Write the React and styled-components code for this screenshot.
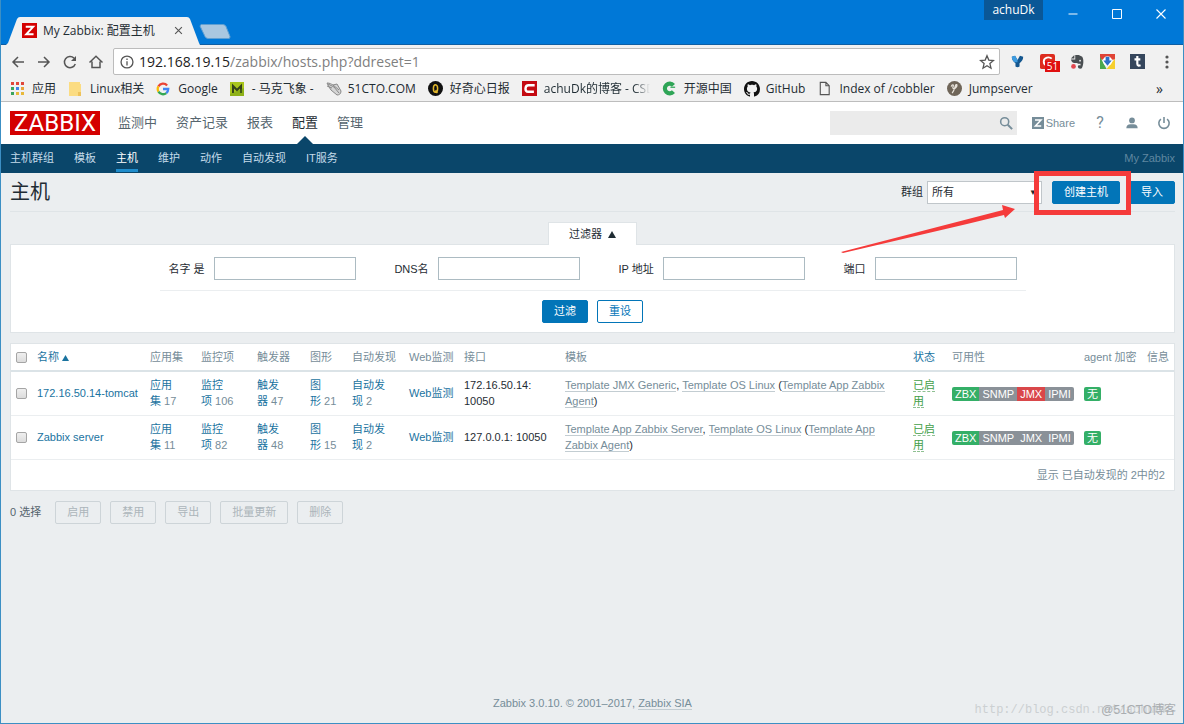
import React from 'react'
import styled, { createGlobalStyle } from 'styled-components'

const uiFont = '"Open Sans", "Noto Sans CJK SC", sans-serif'
const pageFont = '"Liberation Sans", "Noto Sans CJK SC", sans-serif'

const colors = {
  title: '#0078d7',
  chrome: '#f1f1f1',
  nav: '#0a466a',
  page: '#ebeef0',
  link: '#1a739f',
  grey: '#768d99',
  text: '#1f2c33',
  button: '#0275b8',
  green: '#34af67',
  red: '#d9474a',
  mark: '#f53b3b'
}

const menu = [
  { label: '监测中' },
  { label: '资产记录' },
  { label: '报表' },
  { label: '配置', active: true },
  { label: '管理' }
]

const subMenu = ['主机群组', '模板', '主机', '维护', '动作', '自动发现', 'IT服务']

const filters = [
  { id: 'name', label: '名字 是' },
  { id: 'dns', label: 'DNS名' },
  { id: 'ip', label: 'IP 地址' },
  { id: 'port', label: '端口' }
]

const columns = [21, 113, 51, 56, 53, 42, 57, 55, 101, null, 39, 132, 63, 32]

const hosts = [
  {
    name: '172.16.50.14-tomcat',
    counts: [['应用集', 17], ['监控项', 106], ['触发器', 47], ['图形', 21], ['自动发现', 2]],
    address: '172.16.50.14: 10050',
    templates: ['Template JMX Generic', 'Template OS Linux'],
    parent: 'Template App Zabbix Agent',
    jmx: 'red'
  },
  {
    name: 'Zabbix server',
    counts: [['应用集', 11], ['监控项', 82], ['触发器', 48], ['图形', 15], ['自动发现', 2]],
    address: '127.0.0.1: 10050',
    templates: ['Template App Zabbix Server', 'Template OS Linux'],
    parent: 'Template App Zabbix Agent',
    jmx: 'grey'
  }
]

const actions = ['启用', '禁用', '导出', '批量更新', '删除']

const Stroke = ({ size = 16, width = 1.5, children }) => (
  <svg width={size} height={size} viewBox='0 0 16 16' fill='none' stroke='currentColor' strokeWidth={width} aria-hidden='true'>
    {children}
  </svg>
)

const BackIcon = () => <Stroke><path d='M14 8H3M8 3L3 8l5 5' /></Stroke>
const ForwardIcon = () => <Stroke><path d='M2 8h11M8 3l5 5-5 5' /></Stroke>
const ReloadIcon = () => (
  <Stroke>
    <path d='M13.3 10A5.6 5.6 0 1 1 12 4.1' />
    <path d='M14 2v5H9z' fill='currentColor' stroke='none' />
  </Stroke>
)
const HomeIcon = () => <Stroke><path d='M1.500 8.500L8 2.300l6.500 6.200M4 7.500V13.500h8V7.500' /></Stroke>
const InfoIcon = () => (
  <Stroke size={14}>
    <circle cx='8' cy='8' r='6.8' />
    <path d='M8 7v5M8 4v1.600' />
  </Stroke>
)
const StarIcon = () => (
  <Stroke width={1.3}>
    <path d='M8 1.800l1.800 4.300 4.700.4-3.600 3.100 1.100 4.600L8 11.700l-4 2.500 1.100-4.600L1.500 6.500l4.700-.4z' />
  </Stroke>
)

const ZIcon = ({ size = 16, bg = '#d40000' }) => (
  <svg width={size} height={size} viewBox='0 0 16 16' aria-hidden='true'>
    <path d='M0 0h16v16H0z' fill={bg} />
    <path d='M4 4h8L4.500 12H12.300' fill='none' stroke='#fff' strokeWidth='2' />
  </svg>
)

const AppsIcon = () => (
  <svg width='16' height='16' viewBox='0 0 16 16' aria-hidden='true'>
    {['#e0473b', '#e0473b', '#e0473b', '#3aa45c', '#3f82e8', '#e8a33a', '#3aa45c', '#e8b93a', '#e8b93a'].map((c, i) => (
      <rect key={i} x={1 + (i % 3) * 5} y={1 + Math.floor(i / 3) * 5} width='3' height='3' fill={c} />
    ))}
  </svg>
)
const FolderIcon = () => (
  <svg width='16' height='16' viewBox='0 0 16 16' aria-hidden='true'>
    <path d='M1 1h11v2h1v12H1z' fill='#fbdc82' />
    <path d='M10 11h3v4h-3z' fill='#eec25b' />
  </svg>
)
const GoogleIcon = () => (
  <svg width='14' height='14' viewBox='0 0 16 16' fill='none' strokeWidth='2.6' aria-hidden='true'>
    <path d='M12.700 4A6 6 0 0 0 2.800 5' stroke='#ea4335' />
    <path d='M2.800 5a6 6 0 0 0 0 6' stroke='#fbbc05' />
    <path d='M2.800 11a6 6 0 0 0 9 1.600' stroke='#34a853' />
    <path d='M8 8h6a6 6 0 0 1-2.200 4.600' stroke='#4285f4' />
  </svg>
)
const MIcon = () => (
  <svg width='14' height='14' viewBox='0 0 14 14' aria-hidden='true'>
    <path d='M0 0h14v14H0z' fill='#a9c51c' />
    <path d='M3 11V4l4 4 4-4v7' fill='none' stroke='#34421a' strokeWidth='2' />
    <path d='M0 12l14-6v8H0z' fill='#5d8c12' opacity='.35' />
  </svg>
)
const CtoIcon = () => (
  <svg width='16' height='16' viewBox='0 0 16 16' fill='#d5d5d5' stroke='#888' aria-hidden='true'>
    <path d='M1 2c3 0 4 1 6 2l4-1 4 7c0 3-2 4-4 4L5 9 3 6z' />
    <path d='M1 5l5 2M2 3l6 3 5 6M7 4l6 5' fill='none' />
  </svg>
)
const QIcon = () => (
  <svg width='15' height='15' viewBox='0 0 16 16' fill='none' aria-hidden='true'>
    <circle cx='8' cy='8' r='8' fill='#111' />
    <path d='M8 4c-3 0-3 8 0 8s3-8 0-8zM8 10l2 3' stroke='#e4b92c' strokeWidth='1.6' />
  </svg>
)
const CsdnIcon = () => (
  <svg width='15' height='15' viewBox='0 0 16 16' aria-hidden='true'>
    <path d='M0 0h16v16H0z' fill='#c40a12' />
    <path d='M13.500 4.500H7C3 4.500 2.500 11.500 6.500 11.500h6.200' fill='none' stroke='#fff' strokeWidth='2.6' />
  </svg>
)
const OscIcon = () => (
  <svg width='15' height='15' viewBox='0 0 16 16' aria-hidden='true'>
    <path d='M12.200 4.600A5.200 5.200 0 1 0 12.200 11.400' fill='none' stroke='#2fa557' strokeWidth='4.4' />
    <path d='M9 6h5v1.300H9z' fill='#2fa557' />
  </svg>
)
const GithubIcon = () => (
  <svg width='16' height='16' viewBox='0 0 16 16' fill='#111' aria-hidden='true'>
    <path d='M8 0C3.580 0 0 3.580 0 8c0 3.540 2.290 6.530 5.470 7.590.4.070.55-.17.55-.38 0-.19-.01-.82-.01-1.490-2.010.37-2.530-.49-2.690-.94-.09-.23-.48-.94-.82-1.130-.28-.15-.68-.52-.01-.53.63-.01 1.080.58 1.230.82.72 1.210 1.870.87 2.330.66.07-.52.28-.87.51-1.070-1.780-.2-3.640-.89-3.640-3.950 0-.87.31-1.590.82-2.150-.08-.2-.36-1.020.08-2.120 0 0 .67-.21 2.200.82.64-.18 1.320-.27 2-.27s1.360.09 2 .27c1.530-1.040 2.200-.82 2.200-.82.44 1.100.16 1.920.08 2.120.51.56.82 1.270.82 2.150 0 3.070-1.870 3.750-3.650 3.950.29.25.54.73.54 1.480 0 1.070-.01 1.930-.01 2.200 0 .21.15.46.55.38A8.010 8.010 0 0 0 16 8c0-4.420-3.580-8-8-8z' />
  </svg>
)
const PageIcon = () => <Stroke size={15} width={1.2}><path d='M3.500 1.500h6l3.500 3.500v9.500H3.500zM9.500 1.500V5H13' /></Stroke>
const JumpIcon = () => (
  <svg width='15' height='15' viewBox='0 0 16 16' fill='none' aria-hidden='true'>
    <circle cx='8' cy='8' r='8' fill='#6f6558' />
    <path d='M4.500 6c1-3 3-2 2 0s1 3 3 1 1-4 0-3-1 5-4 9' stroke='#e9e4db' strokeWidth='1.3' />
  </svg>
)

const bookmarks = [
  { icon: <AppsIcon />, label: '应用' },
  { icon: <FolderIcon />, label: 'Linux相关' },
  { icon: <GoogleIcon />, label: 'Google' },
  { icon: <MIcon />, label: '- 马克飞象 -' },
  { icon: <CtoIcon />, label: '51CTO.COM' },
  { icon: <QIcon />, label: '好奇心日报' },
  { icon: <CsdnIcon />, label: 'achuDk的博客 - CSD', fade: true },
  { icon: <OscIcon />, label: '开源中国' },
  { icon: <GithubIcon />, label: 'GitHub' },
  { icon: <PageIcon />, label: 'Index of /cobbler' },
  { icon: <JumpIcon />, label: 'Jumpserver' }
]

const YIcon = () => (
  <svg width='13' height='13' viewBox='0 0 16 16' aria-hidden='true'>
    <path d='M1 2l4-1 3 5 3-5 4 1c0 4-2 6-4.500 8v4q-2.500 2-5 0v-4C3 8 1 6 1 2z' fill='#14578f' />
    <path d='M1 2l4-1 3 5v3L4.500 9C2.500 7 1 5 1 2z' fill='#3d9be0' />
  </svg>
)
const CIcon = () => (
  <svg width='15' height='15' viewBox='0 0 16 16' aria-hidden='true'>
    <rect width='16' height='16' rx='2' fill='#dd2c1f' />
    <path d='M12.500 5C10 2.500 4 3.500 4 8s5 5.500 8 3.500' fill='none' stroke='#fff' strokeWidth='2' />
  </svg>
)
const EvernoteIcon = () => (
  <svg width='14' height='14' viewBox='0 0 16 16' aria-hidden='true'>
    <path d='M6 0h4l4 2c2 3 1.500 10-.5 13-1 1-4.500.8-4.500-1.500s2-2 3-1.500V10c-2 0-3 0-4-1-2 .5-6 .5-7-4h5z' fill='#4a4f52' />
    <path d='M5 0v4H1z' fill='#4a4f52' />
    <circle cx='4' cy='13' r='2.7' fill='#e2474f' />
    <circle cx='11.5' cy='6.5' r='1' fill='#f1f1f1' />
  </svg>
)
const DownloadIcon = () => (
  <svg width='15' height='15' viewBox='0 0 16 16' aria-hidden='true'>
    <path d='M0 0h16v6H0z' fill='#e04436' />
    <path d='M0 3l7 13H0z' fill='#4aa84e' />
    <path d='M16 5v11H7z' fill='#f6cf2e' />
    <circle cx='8' cy='7.5' r='5' fill='#fff' />
    <path d='M6 3h4v4h2.500L8 12.500 3.500 7H6z' fill='#2d70c8' />
  </svg>
)
const TumblrIcon = () => (
  <svg width='15' height='15' viewBox='0 0 16 16' aria-hidden='true'>
    <path d='M0 0h16v16H0z' fill='#35465c' />
    <path d='M7.800 2v8.500c0 2 1.500 2.300 3.500 1.500M4.800 5.800H11' fill='none' stroke='#fff' strokeWidth='2.3' />
  </svg>
)

const SearchIcon = () => (
  <Stroke size={14} width={1.8}><circle cx='6.5' cy='6.5' r='4.6' /><path d='M10 10l5 5' strokeWidth='2.3' /></Stroke>
)
const UserIcon = () => (
  <svg width='14' height='14' viewBox='0 0 16 16' fill='currentColor' aria-hidden='true'>
    <circle cx='8' cy='5' r='3.3' />
    <path d='M1.500 14c0-3 2-4.500 4.500-4.500h4c2.500 0 4.500 1.500 4.500 4.500z' />
  </svg>
)
const PowerIcon = () => (
  <Stroke size={14} width={1.8}><path d='M4.500 3.500a5.900 5.900 0 1 0 7 0M8 1v7' /></Stroke>
)

const UpArrow = ({ size = 8 }) => (
  <svg width={size} height={size} viewBox='0 0 8 8' fill='currentColor' aria-hidden='true'><path d='M4 1l4 7H0z' /></svg>
)

const Browser = () => (
  <>
    <TitleBar>
      <TabShape>
        <TabOutline viewBox='0 0 194 28' aria-hidden='true'>
          <path d='M0 28L2 26 11 2Q12 0 14 0H181Q183 0 184 2L193 26 194 28z' fill={colors.chrome} />
        </TabOutline>
        <TabContent>
          <ZIcon size={15} />
          <TabTitle>My Zabbix: 配置主机</TabTitle>
          <TabClose type='button' aria-label='关闭标签页'>
            <Stroke size={9} width={2}><path d='M2 2l12 12M14 2L2 14' /></Stroke>
          </TabClose>
        </TabContent>
      </TabShape>
      <NewTab type='button' aria-label='新标签页'>
        <svg width='32' height='15' viewBox='0 0 32 15' aria-hidden='true'>
          <path d='M2 .500h22q2 0 3 2l4 10q0 2-1 2H9q-2 0-3-2L1 2z' fill='#a9c7e0' stroke='#5f9fd2' />
        </svg>
      </NewTab>
      <WindowControls>
        <Profile type='button'>achuDk</Profile>
        <WindowButton type='button' aria-label='最小化'><Stroke size={12} width={1.3}><path d='M2 8h12' /></Stroke></WindowButton>
        <WindowButton type='button' aria-label='最大化'><Stroke size={12} width={1.3}><path d='M2 2h12v12H2z' /></Stroke></WindowButton>
        <WindowButton type='button' aria-label='关闭'><Stroke size={12} width={1.5}><path d='M2 2l12 12M14 2L2 14' /></Stroke></WindowButton>
      </WindowControls>
    </TitleBar>
    <Toolbar>
      <ToolButtons>
        <IconButton type='button' aria-label='后退'><BackIcon /></IconButton>
        <IconButton type='button' aria-label='前进'><ForwardIcon /></IconButton>
        <IconButton type='button' aria-label='重新加载'><ReloadIcon /></IconButton>
        <IconButton type='button' aria-label='主页'><HomeIcon /></IconButton>
      </ToolButtons>
      <AddressBar>
        <InfoIcon />
        <Address>192.168.19.15<span>/zabbix/hosts.php?ddreset=1</span></Address>
        <IconButton type='button' aria-label='收藏'><StarIcon /></IconButton>
      </AddressBar>
      <Extensions>
        <IconButton type='button' aria-label='Y'><YIcon /></IconButton>
        <IconButton type='button' aria-label='C'><CIcon /><Count>51</Count></IconButton>
        <IconButton type='button' aria-label='Evernote'><EvernoteIcon /></IconButton>
        <IconButton type='button' aria-label='下载'><DownloadIcon /></IconButton>
        <IconButton type='button' aria-label='Tumblr'><TumblrIcon /></IconButton>
        <IconButton type='button' aria-label='菜单'>
          <svg width='16' height='16' viewBox='0 0 16 16' fill='currentColor' aria-hidden='true'>
            <circle cx='8' cy='3' r='1.6' /><circle cx='8' cy='8' r='1.6' /><circle cx='8' cy='13' r='1.6' />
          </svg>
        </IconButton>
      </Extensions>
    </Toolbar>
    <Bookmarks>
      {bookmarks.map(({ icon, label, fade }) => (
        <Bookmark href='#' key={label}>
          <BookmarkIcon>{icon}</BookmarkIcon>
          <BookmarkLabel $fade={fade}>{label}</BookmarkLabel>
        </Bookmark>
      ))}
      <MoreBookmarks type='button' aria-label='更多书签'>»</MoreBookmarks>
    </Bookmarks>
  </>
)

const Header = () => (
  <header>
    <TopBar>
      <Logo href='#'>ZABBIX</Logo>
      <Menu>
        {menu.map(({ label, active }) => (
          <MenuLink href='#' key={label} $active={active}>{label}</MenuLink>
        ))}
      </Menu>
      <SearchBox>
        <input type='search' aria-label='搜索' />
        <button type='button' aria-label='搜索'><SearchIcon /></button>
      </SearchBox>
      <TopLinks>
        <ShareLink href='#'><ZIcon size={12} bg={colors.grey} />Share</ShareLink>
        <TopLink href='#'>?</TopLink>
        <TopLink href='#' aria-label='用户'><UserIcon /></TopLink>
        <TopLink href='#' aria-label='退出'><PowerIcon /></TopLink>
      </TopLinks>
    </TopBar>
    <SubNav>
      {subMenu.map(label => (
        <SubLink href='#' key={label} $active={label === '主机'}>{label}</SubLink>
      ))}
      <ServerName>My Zabbix</ServerName>
    </SubNav>
  </header>
)

const HostRow = ({ host }) => (
  <tr>
    <Cell><Checkbox type='checkbox' aria-label={host.name} /></Cell>
    <Cell $nowrap><TextLink href='#'>{host.name}</TextLink></Cell>
    {host.counts.map(([label, count]) => (
      <Cell key={label}><TextLink href='#'>{label}</TextLink><Sup>{'\u00a0'}{count}</Sup></Cell>
    ))}
    <Cell $nowrap><TextLink href='#'>Web监测</TextLink></Cell>
    <Cell>{host.address}</Cell>
    <Cell>
      <DottedLink href='#'>{host.templates[0]}</DottedLink>{', '}
      <DottedLink href='#'>{host.templates[1]}</DottedLink>{' ('}
      <DottedLink href='#'>{host.parent}</DottedLink>)
    </Cell>
    <Cell><DottedLink href='#' $green>已启用</DottedLink></Cell>
    <Cell>
      <Statuses>
        <Status $color={colors.green}>ZBX</Status>
        <Status>SNMP</Status>
        <Status $color={host.jmx === 'red' ? colors.red : undefined}>JMX</Status>
        <Status>IPMI</Status>
      </Statuses>
    </Cell>
    <Cell><Statuses><Status $color={colors.green}>无</Status></Statuses></Cell>
    <Cell />
  </tr>
)

const App = () => (
  <Window>
    <GlobalStyle />
    <Browser />
    <Header />
    <Main>
      <PageTitle>
        <h1>主机</h1>
        <TitleControls>
          <label htmlFor='group'>群组</label>
          <SelectWrap>
            <select id='group'><option>所有</option></select>
            <span>▼</span>
          </SelectWrap>
          <Marked>
            <Button type='button' $primary>创建主机</Button>
            <MarkBox />
            <MarkArrow viewBox='0 0 174 48' aria-hidden='true'>
              <path d='M0 47L162 5 161 0 174 4 164 13 163 10 126 19 2 48z' fill={colors.mark} />
            </MarkArrow>
          </Marked>
          <Button type='button' $primary>导入</Button>
        </TitleControls>
      </PageTitle>

      <FilterTab type='button'>过滤器<UpArrow /></FilterTab>
      <FilterPanel>
        <FilterFields>
          {filters.map(({ id, label }) => (
            <Field key={id}>
              <label htmlFor={id}>{label}</label>
              <input id={id} type='text' />
            </Field>
          ))}
        </FilterFields>
        <FilterButtons>
          <Button type='submit' $primary>过滤</Button>
          <Button type='reset'>重设</Button>
        </FilterButtons>
      </FilterPanel>

      <TablePanel>
        <Table>
          <colgroup>
            {columns.map((width, i) => <Column key={i} $width={width} />)}
          </colgroup>
          <thead>
            <tr>
              <Head><Checkbox type='checkbox' aria-label='全选' /></Head>
              <Head><TextLink href='#'>名称 <UpArrow size={7} /></TextLink></Head>
              <Head>应用集</Head>
              <Head>监控项</Head>
              <Head>触发器</Head>
              <Head>图形</Head>
              <Head>自动发现</Head>
              <Head>Web监测</Head>
              <Head>接口</Head>
              <Head>模板</Head>
              <Head><TextLink href='#'>状态</TextLink></Head>
              <Head>可用性</Head>
              <Head>agent 加密</Head>
              <Head>信息</Head>
            </tr>
          </thead>
          <tbody>
            {hosts.map(host => <HostRow host={host} key={host.name} />)}
          </tbody>
        </Table>
        <Totals>显示 已自动发现的 2中的2</Totals>
      </TablePanel>

      <Actions>
        <span>0 选择</span>
        {actions.map(label => <ActionButton type='button' disabled key={label}>{label}</ActionButton>)}
      </Actions>

      <Footer>Zabbix 3.0.10. © 2001–2017, <DottedLink href='#'>Zabbix SIA</DottedLink></Footer>
    </Main>
    <Watermark>http://blog.csdn.net/achuDk</Watermark>
    <Stamp>@51CTO博客</Stamp>
  </Window>
)

const GlobalStyle = createGlobalStyle`
  * {
    box-sizing: border-box;
  }

  body {
    margin: 0;
  }

  a {
    color: inherit;
    text-decoration: none;
  }

  button, input, select {
    font: inherit;
    color: inherit;
    margin: 0;
  }

  svg {
    flex: none;
  }
`
const Window = styled.div`
  position: relative;
  min-height: 100vh;
  display: flex;
  flex-direction: column;
  border: 1px solid #3c8fc4;
  border-top: 0;
  background-color: ${colors.page};
  color: ${colors.text};
  font: 11px/16px ${pageFont};
`
const TitleBar = styled.div`
  display: flex;
  align-items: flex-end;
  height: 45px;
  padding-left: 5px;
  background-color: ${colors.title};
  border-bottom: 1px solid #0e5ea3;
  font-family: ${uiFont};
`
const TabShape = styled.div`
  position: relative;
  width: 194px;
  height: 27px;
`
const TabOutline = styled.svg`
  position: absolute;
  left: 0;
  bottom: -1px;
  width: 100%;
`
const TabContent = styled.div`
  position: relative;
  display: flex;
  align-items: center;
  height: 100%;
  padding: 0 14px 0 16px;
`
const TabTitle = styled.span`
  flex: 1;
  margin-left: 6px;
  font-size: 12px;
  white-space: nowrap;
`
const IconButton = styled.button`
  position: relative;
  display: flex;
  align-items: center;
  justify-content: center;
  width: 16px;
  padding: 0;
  border: 0;
  background: none;
  color: #555;
`
const TabClose = styled(IconButton)``
const NewTab = styled(IconButton)`
  width: 30px;
  margin-bottom: 5px;
`
const WindowControls = styled.div`
  display: flex;
  align-self: flex-start;
  margin-left: auto;
  color: white;
`
const Profile = styled.button`
  height: 20px;
  width: 59px;
  padding: 0;
  border: 0;
  background-color: #0a5796;
  color: white;
  font-size: 12px;
  line-height: 20px;
  margin-right: 8px;
`
const WindowButton = styled.button`
  display: flex;
  align-items: center;
  justify-content: center;
  width: 44px;
  height: 28px;
  border: 0;
  padding: 0;
  background: none;
`
const Toolbar = styled.div`
  display: flex;
  align-items: center;
  gap: 9px;
  height: 33px;
  padding: 0 8px 0 9px;
  background-color: ${colors.chrome};
`
const ToolButtons = styled.div`
  display: flex;
  gap: 10px;
`
const AddressBar = styled.div`
  flex: 1;
  display: flex;
  align-items: center;
  height: 27px;
  padding: 0 4px 0 6px;
  border: 1px solid #bcbcbc;
  border-radius: 2px;
  background-color: white;
  color: #555;
`
const Address = styled.div`
  flex: 1;
  margin-left: 5px;
  font: 14px/20px ${uiFont};
  color: #222;

  span {
    color: #808080;
  }
`
const Extensions = styled.div`
  display: flex;
  gap: 14px;
`
const Count = styled.span`
  position: absolute;
  left: 6px;
  top: 7px;
  width: 15px;
  background-color: #e01010;
  color: white;
  font: 10px/11px ${uiFont};
`
const Bookmarks = styled.nav`
  display: flex;
  align-items: center;
  gap: 12px;
  height: 24px;
  padding: 0 20px 2px 9px;
  background-color: ${colors.chrome};
  border-bottom: 1px solid #bdbdbd;
  font: 12px/18px ${uiFont};
`
const Bookmark = styled.a`
  display: flex;
  align-items: center;
  gap: 6px;
`
const BookmarkIcon = styled.span`
  display: flex;
  width: 16px;
  color: #555;
`
const BookmarkLabel = styled.span`
  white-space: nowrap;
  ${({ $fade }) => $fade && `
    overflow: hidden;
    width: 106px;
    mask-image: linear-gradient(90deg, black 85%, transparent);
  `}
`
const MoreBookmarks = styled.button`
  margin-left: auto;
  padding: 0;
  border: 0;
  background: none;
  font-size: 14px;
`
const TopBar = styled.div`
  display: flex;
  align-items: center;
  height: 42px;
  padding: 0 12px 0 9px;
  background-color: white;
`
const Logo = styled.a`
  width: 90px;
  height: 24px;
  background-color: #d40000;
  color: white;
  font: 24px/25px Roboto, sans-serif;
  text-align: center;
`
const Menu = styled.nav`
  display: flex;
  gap: 19px;
  margin-left: 18px;
  font-size: 13px;
`
const MenuLink = styled.a`
  position: relative;
  line-height: 42px;
  color: ${({ $active }) => $active ? colors.text : '#56656e'};

  ${({ $active }) => $active && `
    &::after {
      content: '';
      position: absolute;
      left: 50%;
      bottom: 0;
      margin-left: -8px;
      border: 8px solid transparent;
      border-top: 0;
      border-bottom-color: ${colors.nav};
    }
  `}
`
const SearchBox = styled.div`
  display: flex;
  width: 187px;
  height: 24px;
  margin-left: auto;
  background-color: #ebebeb;
  color: ${colors.grey};

  input {
    flex: 1;
    min-width: 0;
    border: 0;
    background: none;
  }

  button {
    display: flex;
    align-items: center;
    padding: 0 4px;
    border: 0;
    background: none;
  }
`
const TopLinks = styled.div`
  display: flex;
  align-items: center;
  gap: 18px;
  margin-left: 15px;
  color: ${colors.grey};
`
const ShareLink = styled.a`
  display: flex;
  align-items: center;
  gap: 2px;
`
const TopLink = styled.a`
  display: flex;
  align-items: center;
  justify-content: center;
  width: 14px;
  font: 16px/20px Roboto, sans-serif;
`
const SubNav = styled.nav`
  display: flex;
  gap: 20px;
  height: 29px;
  padding: 0 8px 0 9px;
  background-color: ${colors.nav};
  color: #c5dcea;
`
const SubLink = styled.a`
  line-height: 28px;
  height: 28px;
  ${({ $active }) => $active && `
    color: white;
    border-bottom: 3px solid #1f8ccb;
  `}
`
const ServerName = styled.span`
  margin-left: auto;
  line-height: 28px;
  color: #5f87a0;
`
const Main = styled.main`
  flex: 1;
  display: flex;
  flex-direction: column;
  padding: 0 8px 12px 9px;
`
const PageTitle = styled.div`
  display: flex;
  align-items: center;
  justify-content: space-between;
  height: 39px;
  border-bottom: 1px solid #dfe4e7;

  h1 {
    margin: 0;
    font-size: 20px;
    line-height: 28px;
    font-weight: 400;
  }
`
const TitleControls = styled.div`
  display: flex;
  align-items: center;

  label {
    margin-right: 4px;
  }
`
const SelectWrap = styled.div`
  position: relative;
  width: 115px;
  margin-right: 10px;

  select {
    appearance: none;
    display: block;
    width: 100%;
    height: 23px;
    padding: 0 4px;
    border: 1px solid #c0c6ca;
    border-radius: 0;
    background-color: white;
  }

  span {
    position: absolute;
    right: 5px;
    top: 4px;
    font-size: 8px;
    pointer-events: none;
  }
`
const Button = styled.button`
  height: 23px;
  padding: 0 11px;
  border: 1px solid ${colors.button};
  border-radius: 2px;
  line-height: 21px;
  background-color: ${({ $primary }) => $primary ? colors.button : 'white'};
  color: ${({ $primary }) => $primary ? 'white' : colors.button};
`
const Marked = styled.div`
  position: relative;
  margin-right: 9px;
`
const MarkBox = styled.span`
  position: absolute;
  inset: -10px -11px -11px -18px;
  border: 5px solid ${colors.mark};
  pointer-events: none;
`
const MarkArrow = styled.svg`
  position: absolute;
  right: 105px;
  top: 24px;
  width: 174px;
  height: 48px;
  pointer-events: none;
`
const FilterTab = styled.button`
  position: relative;
  display: flex;
  align-items: center;
  justify-content: center;
  gap: 6px;
  align-self: center;
  width: 89px;
  height: 23px;
  margin: 10px 0 -1px;
  padding: 0;
  border: 1px solid #dfe4e7;
  border-bottom: 0;
  background-color: white;
`
const FilterPanel = styled.form`
  display: flex;
  flex-direction: column;
  align-items: center;
  padding: 12px 0 9px;
  border: 1px solid #dfe4e7;
  background-color: white;
`
const FilterFields = styled.div`
  display: flex;
  justify-content: space-between;
  width: 866px;
  max-width: 100%;
  padding: 0 9px 10px;
  border-bottom: 1px solid #ebeef0;
`
const Field = styled.div`
  display: flex;
  align-items: center;
  gap: 9px;

  input {
    width: 142px;
    height: 23px;
    border: 1px solid #acbbc2;
  }
`
const FilterButtons = styled.div`
  display: flex;
  gap: 9px;
  margin-top: 9px;
`
const TablePanel = styled.div`
  margin-top: 10px;
  border: 1px solid #dfe4e7;
  background-color: white;
`
const Table = styled.table`
  width: 100%;
  table-layout: fixed;
  border-collapse: collapse;
`
const Column = styled.col`
  width: ${({ $width }) => $width ? `${$width}px` : 'auto'};
`
const Head = styled.th`
  height: 27px;
  padding: 0 5px;
  border-bottom: 2px solid #dbe3e7;
  color: ${colors.grey};
  font-weight: 400;
  text-align: left;
  white-space: nowrap;
`
const Cell = styled.td`
  height: 44px;
  padding: 5px;
  border-bottom: 1px solid #ebeef0;
  vertical-align: middle;
  white-space: ${({ $nowrap }) => $nowrap ? 'nowrap' : 'normal'};
`
const Checkbox = styled.input`
  appearance: none;
  display: block;
  width: 11px;
  height: 11px;
  border: 1px solid #a5a5a5;
  border-radius: 2px;
  background-image: linear-gradient(#efefef, #dcdcdc);
`
const TextLink = styled.a`
  color: ${colors.link};
`
const Sup = styled.span`
  color: ${colors.grey};
`
const DottedLink = styled.a`
  color: ${({ $green }) => $green ? '#429e47' : colors.grey};
  border-bottom: 1px ${({ $green }) => $green ? 'dashed #8fc092' : 'solid #c3cdd2'};
`
const Statuses = styled.div`
  display: inline-flex;
  overflow: hidden;
  border-radius: 2px;
  vertical-align: middle;
`
const Status = styled.span`
  padding: 0 3px;
  line-height: 14px;
  color: white;
  background-color: ${({ $color }) => $color || '#8a9198'};
`
const Totals = styled.div`
  padding: 7px 9px;
  color: ${colors.grey};
  text-align: right;
`
const Actions = styled.div`
  display: flex;
  align-items: center;
  gap: 9px;
  margin-top: 10px;
  color: #56656e;

  span {
    margin-right: 5px;
  }
`
const ActionButton = styled(Button)`
  border-color: #cdd4d8;
  background-color: transparent;
  color: #acb5ba;
`
const Footer = styled.footer`
  margin-top: auto;
  color: ${colors.grey};
  text-align: center;
`
const Watermark = styled.div`
  position: absolute;
  right: 14px;
  bottom: 4px;
  color: #ccd0d2;
  font: 12px/18px "Liberation Mono", monospace;
`
const Stamp = styled.div`
  position: absolute;
  right: 7px;
  bottom: 4px;
  color: #a9adb0;
  font-size: 12px;
  line-height: 18px;
`

export default App
